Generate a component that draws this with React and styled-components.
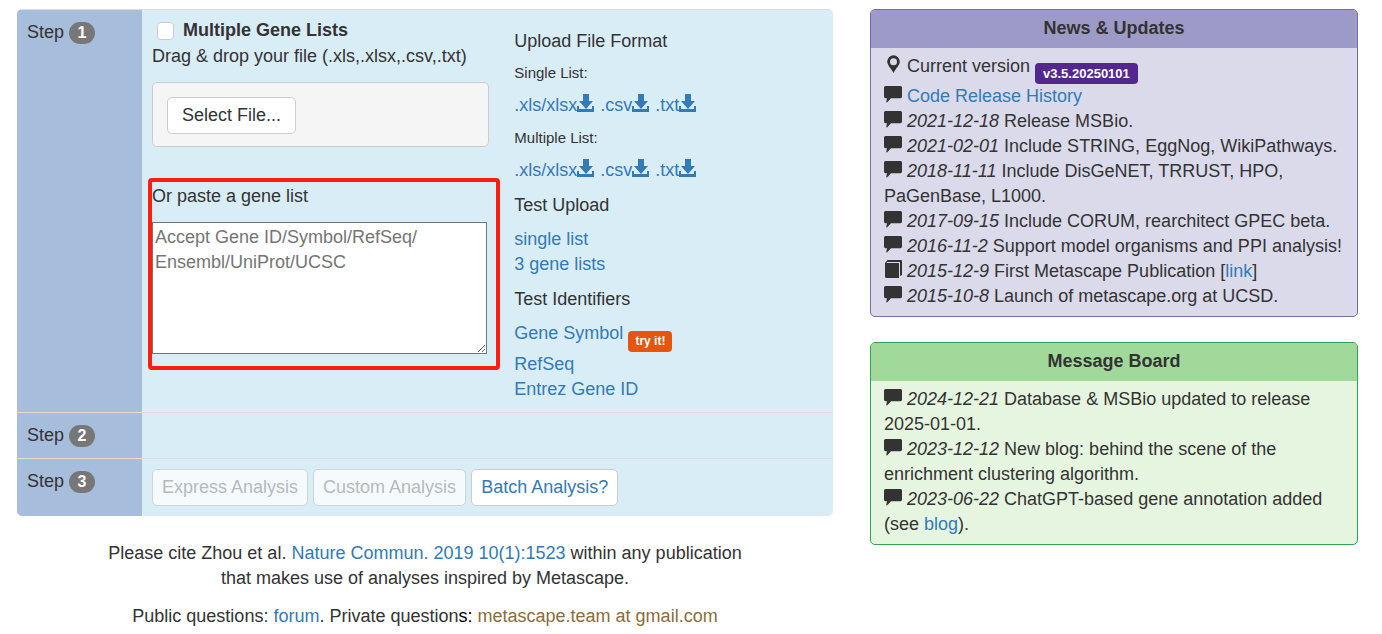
import React from "react";
import styled, { createGlobalStyle } from "styled-components";

const GlobalStyle = createGlobalStyle`
  *, *::before, *::after { box-sizing: border-box; }
  body {
    margin: 0;
    background: #fff;
    color: #333;
    font-family: "Liberation Sans", Arial, sans-serif;
    font-size: 18px;
    line-height: 25px;
  }
  button, input, textarea { font: inherit; }
`;

const Page = styled.div`
  display: grid;
  grid-template-columns: minmax(0, 1.672fr) minmax(0, 1fr);
  column-gap: 37px;
  align-items: start;
  padding: 9px 24px 8px 17px;
`;

const Link = styled.a`
  color: #337ab7;
  text-decoration: none;
  &:hover { text-decoration: underline; }
`;

const Steps = styled.section`
  border-radius: 5px;
  overflow: hidden;
`;

const StepRow = styled.div`
  display: flex;
  border-top: 1px solid #ddd;
`;

const StepName = styled.div`
  flex: 0 0 125px;
  display: flex;
  align-items: flex-start;
  gap: 5px;
  padding: 10px;
  background: #a6bddb;
`;

const StepNumber = styled.span`
  min-width: 26px;
  margin-top: 2px;
  border-radius: 11px;
  background: #777;
  color: #fff;
  font-size: 16px;
  font-weight: bold;
  line-height: 22px;
  text-align: center;
`;

const StepBody = styled.div`
  flex: 1;
  min-width: 0;
  display: flex;
  padding: 10px;
  background: #d9edf7;
`;

const UploadColumn = styled.div`
  flex: 0 0 54%;
  padding-right: 25px;
`;

const CheckLabel = styled.label`
  display: flex;
  align-items: center;
  gap: 9px;
  height: 20px;
  margin: 0 0 4px 5px;
  font-weight: bold;
  line-height: 20px;
`;

const CheckBox = styled.input`
  appearance: none;
  width: 17px;
  height: 18px;
  margin: 2px 0 0;
  border: 1px solid #ccc;
  border-radius: 4px;
  background: #fff;
  &:checked { background: #337ab7; }
`;

const Text = styled.p`
  margin: 0;
`;

const DropZone = styled.div`
  margin-top: 13px;
  padding: 14px;
  height: 65px;
  border: 1px solid #ccc;
  border-radius: 5px;
  background: #f5f5f5;
`;

const Button = styled.button`
  height: 37px;
  padding: 0 ${(p) => (p.$wide ? 14 : 9)}px;
  border: 1px solid #ccc;
  border-radius: 5px;
  background: #fff;
  color: ${(p) => (p.$link ? "#337ab7" : "#333")};
  line-height: 25px;
  white-space: nowrap;
  cursor: pointer;
  &:disabled {
    border-color: #ccd5d9;
    background: #f5fafd;
    color: #b5babd;
    cursor: not-allowed;
  }
`;

const ButtonRow = styled.div`
  display: flex;
  flex-wrap: wrap;
  gap: 5px;
`;

const PasteBox = styled.div`
  display: flex;
  flex-direction: column;
  gap: 13px;
  margin: 31px -11px 0 -4px;
  padding: 2px 9px 12px 0;
  border: 4px solid #ff1d0f;
  border-radius: 4px;
`;

const GeneInput = styled.textarea`
  display: block;
  width: 100%;
  height: 132px;
  padding: 2px;
  border: 1px solid #767676;
  background: #fff;
  color: #333;
  resize: both;
  &::placeholder { color: #757575; }
`;

const InfoColumn = styled.div`
  flex: 1;
  min-width: 0;
  display: flex;
  flex-direction: column;
  gap: 10px;
  padding-top: 9px;
`;

const InfoHeading = styled.h4`
  margin: 0;
  font-size: 18px;
  font-weight: normal;
  line-height: 24px;
`;

const InfoSubheading = styled.h5`
  margin: 0;
  font-size: 15px;
  font-weight: normal;
  line-height: 20px;
`;

const PlainList = styled.ul`
  margin: 0;
  padding: 0;
  list-style: none;
`;

const Tag = styled.span`
  display: inline-block;
  height: 21px;
  padding: 0 ${(p) => (p.$small ? 7 : 8)}px;
  border-radius: 4px;
  background: ${(p) => p.$color};
  color: #fff;
  font-size: ${(p) => (p.$small ? 12 : 13)}px;
  font-weight: bold;
  line-height: 21px;
  vertical-align: -6px;
`;

const Glyph = styled.svg`
  width: 18px;
  height: 18px;
  fill: currentColor;
  vertical-align: -1px;
`;

const Citation = styled.footer`
  display: flex;
  flex-direction: column;
  gap: 13px;
  padding-top: 25px;
  text-align: center;
`;

const Strong = styled.span`
  color: #000;
`;

const Email = styled.span`
  color: #8a6d3b;
`;

const Sidebar = styled.aside`
  display: flex;
  flex-direction: column;
  gap: 25px;
`;

const Panel = styled.section`
  border: 1px solid ${(p) => p.$line};
  border-radius: 5px;
  background: ${(p) => p.$fill};
  overflow: hidden;
`;

const PanelTitle = styled.h3`
  margin: 0;
  padding: 6px 13px 7px;
  background: ${(p) => p.$fill};
  font-size: 18px;
  font-weight: bold;
  line-height: 25px;
  text-align: center;
`;

const PanelList = styled(PlainList)`
  padding: 6px 13px 7px;
`;

const DownloadIcon = () => (
  <Glyph viewBox="0 0 18 18" aria-hidden="true">
    <path d="M6 0h6v7h4L9 15 2 7h4zM0 12h2v3h13v-3h2v6H0z" fillRule="nonzero" />
  </Glyph>
);

const CommentIcon = () => (
  <Glyph viewBox="0 0 18 18" aria-hidden="true">
    <path d="M1.5 1h15Q18 1 18 2.500v9Q18 13.300 16.500 13.300H7L3 17.500Q2 17.500 2.300 16.500L3 13.300H1.500Q0 13.300 0 11.500v-9Q0 1 1.500 1z" />
  </Glyph>
);

const MarkerIcon = () => (
  <Glyph viewBox="0 0 18 18" aria-hidden="true">
    <path
      fillRule="evenodd"
      d="M9.500 0.300a6.300 6.300 0 0 0-6.300 6.300c0 3.500 3.500 6.400 6.300 11.400 2.800-5 6.300-7.900 6.300-11.400A6.300 6.300 0 0 0 9.500 0.300zM9.500 3.300a3.500 3.500 0 1 1 0 7 3.500 3.500 0 0 1 0-7z"
    />
  </Glyph>
);

const BookIcon = () => (
  <Glyph viewBox="0 0 18 18" aria-hidden="true">
    <path d="M3.500 0H17Q18 0 18 1v14l-2 1V2H3l-.5 1H14.500q.5 0 .5.500V18H2.500Q1 18 1 16.500V3z" />
  </Glyph>
);

const Downloads = () => (
  <Text>
    <Link href="#xlsx">.xls/xlsx<DownloadIcon /></Link>{" "}
    <Link href="#csv">.csv<DownloadIcon /></Link>{" "}
    <Link href="#txt">.txt<DownloadIcon /></Link>
  </Text>
);

const Step = ({ number, children }) => (
  <StepRow>
    <StepName>
      Step <StepNumber>{number}</StepNumber>
    </StepName>
    <StepBody>{children}</StepBody>
  </StepRow>
);

const Entry = ({ date, Icon = CommentIcon, children }) => (
  <li>
    <Icon /> {date && <><em>{date}</em>{" "}</>}
    {children}
  </li>
);

export default function App() {
  return (
    <>
      <GlobalStyle />
      <Page>
        <main>
          <Steps>
            <Step number={1}>
              <UploadColumn>
                <CheckLabel htmlFor="multiple">
                  <CheckBox id="multiple" type="checkbox" />
                  Multiple Gene Lists
                </CheckLabel>
                <Text>Drag &amp; drop your file (.xls,.xlsx,.csv,.txt)</Text>
                <DropZone>
                  <Button type="button" $wide>Select File...</Button>
                </DropZone>
                <PasteBox>
                  <label htmlFor="genes">Or paste a gene list</label>
                  <GeneInput
                    id="genes"
                    placeholder={"Accept Gene ID/Symbol/RefSeq/\nEnsembl/UniProt/UCSC"}
                  />
                </PasteBox>
              </UploadColumn>
              <InfoColumn>
                <InfoHeading>Upload File Format</InfoHeading>
                <InfoSubheading>Single List:</InfoSubheading>
                <Downloads />
                <InfoSubheading>Multiple List:</InfoSubheading>
                <Downloads />
                <InfoHeading>Test Upload</InfoHeading>
                <PlainList>
                  <li><Link href="#single">single list</Link></li>
                  <li><Link href="#three">3 gene lists</Link></li>
                </PlainList>
                <InfoHeading>Test Identifiers</InfoHeading>
                <PlainList>
                  <li>
                    <Link href="#symbol">Gene Symbol</Link>{" "}
                    <Tag $small $color="#e6550d">try it!</Tag>
                  </li>
                  <li><Link href="#refseq">RefSeq</Link></li>
                  <li><Link href="#entrez">Entrez Gene ID</Link></li>
                </PlainList>
              </InfoColumn>
            </Step>
            <Step number={2} />
            <Step number={3}>
              <ButtonRow>
                <Button type="button" disabled>Express Analysis</Button>
                <Button type="button" disabled>Custom Analysis</Button>
                <Button type="button" $link>Batch Analysis?</Button>
              </ButtonRow>
            </Step>
          </Steps>
          <Citation>
            <Text>
              Please cite Zhou et al.{" "}
              <Link href="#paper">Nature Commun. 2019 10(1):1523</Link> within any publication
              <br />
              that makes use of analyses inspired by Metascape.
            </Text>
            <Text>
              Public questions: <Link href="#forum">forum</Link>. Private question
              <Strong>s:</Strong> <Email>metascape.team at gmail.com</Email>
            </Text>
          </Citation>
        </main>
        <Sidebar>
          <Panel $line="#756bb1" $fill="#dadaeb">
            <PanelTitle $fill="#9e9ac8">News &amp; Updates</PanelTitle>
            <PanelList>
              <Entry Icon={MarkerIcon}>
                Current version <Tag $color="#54278f">v3.5.20250101</Tag>
              </Entry>
              <Entry><Link href="#history">Code Release History</Link></Entry>
              <Entry date="2021-12-18">Release MSBio.</Entry>
              <Entry date="2021-02-01">Include STRING, EggNog, WikiPathways.</Entry>
              <Entry date="2018-11-11">Include DisGeNET, TRRUST, HPO, PaGenBase, L1000.</Entry>
              <Entry date="2017-09-15">Include CORUM, rearchitect GPEC beta.</Entry>
              <Entry date="2016-11-2">Support model organisms and PPI analysis!</Entry>
              <Entry date="2015-12-9" Icon={BookIcon}>
                First Metascape Publication [<Link href="#publication">link</Link>]
              </Entry>
              <Entry date="2015-10-8">Launch of metascape.org at UCSD.</Entry>
            </PanelList>
          </Panel>
          <Panel $line="#31a354" $fill="#e5f5e0">
            <PanelTitle $fill="#a1d99b">Message Board</PanelTitle>
            <PanelList>
              <Entry date="2024-12-21">Database &amp; MSBio updated to release 2025-01-01.</Entry>
              <Entry date="2023-12-12">
                New blog: behind the scene of the enrichment clustering algorithm.
              </Entry>
              <Entry date="2023-06-22">
                ChatGPT-based gene annotation added (see <Link href="#blog">blog</Link>).
              </Entry>
            </PanelList>
          </Panel>
        </Sidebar>
      </Page>
    </>
  );
}
